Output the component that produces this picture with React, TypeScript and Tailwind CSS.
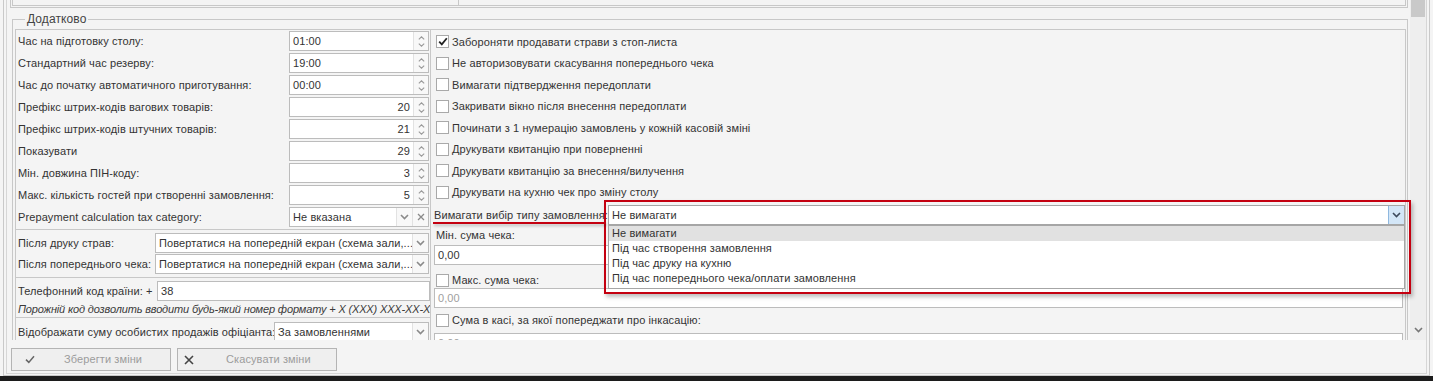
import React from "react";

const spinRows = [
  { label: "Час на підготовку столу:", value: "01:00", right: false },
  { label: "Стандартний час резерву:", value: "19:00", right: false },
  { label: "Час до початку автоматичного приготування:", value: "00:00", right: false },
  { label: "Префікс штрих-кодів вагових товарів:", value: "20", right: true },
  { label: "Префікс штрих-кодів штучних товарів:", value: "21", right: true },
  { label: "Показувати", value: "29", right: true },
  { label: "Мін. довжина ПІН-коду:", value: "3", right: true },
  { label: "Макс. кількість гостей при створенні замовлення:", value: "5", right: true },
];

const checks = [
  { label: "Забороняти продавати страви з стоп-листа", on: true },
  { label: "Не авторизовувати скасування попереднього чека", on: false },
  { label: "Вимагати підтвердження передоплати", on: false },
  { label: "Закривати вікно після внесення передоплати", on: false },
  { label: "Починати з 1 нумерацію замовлень у кожній касовій зміні", on: false },
  { label: "Друкувати квитанцію при поверненні", on: false },
  { label: "Друкувати квитанцію за внесення/вилучення", on: false },
  { label: "Друкувати на кухню чек про зміну столу", on: false },
];

const orderTypes = [
  "Не вимагати",
  "Під час створення замовлення",
  "Під час друку на кухню",
  "Під час попереднього чека/оплати замовлення",
];

function Chevron({ color = "#8a8a8a" }: { color?: string }) {
  return (
    <svg width="9" height="6" viewBox="0 0 9 6">
      <polyline points="1,1 4.5,4.5 8,1" fill="none" stroke={color} strokeWidth="1.6" />
    </svg>
  );
}

function Spinner() {
  return (
    <div className="flex w-[15px] flex-col items-center justify-center gap-[3px] border-l border-[#e2e2e2] bg-[#f8f8f8]">
      <svg width="7" height="4" viewBox="0 0 7 4">
        <polyline points="0.8,3.4 3.5,0.8 6.2,3.4" fill="none" stroke="#9a9a9a" strokeWidth="1.1" />
      </svg>
      <svg width="7" height="4" viewBox="0 0 7 4">
        <polyline points="0.8,0.6 3.5,3.2 6.2,0.6" fill="none" stroke="#9a9a9a" strokeWidth="1.1" />
      </svg>
    </div>
  );
}

function SpinInput({ value, right }: { value: string; right: boolean }) {
  return (
    <div className="flex h-[20px] w-[140px] border border-[#bcbcbc] bg-white">
      <div className={"flex flex-1 items-center px-[3px] " + (right ? "justify-end" : "justify-start")}>{value}</div>
      <Spinner />
    </div>
  );
}

function Combo({ text, clear }: { text: string; clear?: boolean }) {
  return (
    <div className="flex h-[20px] min-w-0 flex-1 border border-[#bcbcbc] bg-white">
      <div className="flex min-w-0 flex-1 items-center overflow-hidden whitespace-nowrap px-[3px]">{text}</div>
      <div className="flex w-[16px] items-center justify-center border-l border-[#e2e2e2] bg-[#f8f8f8]">
        <Chevron />
      </div>
      {clear && (
        <div className="flex w-[16px] items-center justify-center border-l border-[#e2e2e2] bg-[#f8f8f8]">
          <svg width="8" height="8" viewBox="0 0 8 8">
            <path d="M1 1L7 7M7 1L1 7" stroke="#8a8a8a" strokeWidth="1.3" />
          </svg>
        </div>
      )}
    </div>
  );
}

function Checkbox({ on }: { on: boolean }) {
  return (
    <div className="flex h-[13px] w-[13px] shrink-0 items-center justify-center border border-[#a9a9a9] bg-white">
      {on && (
        <svg width="10" height="9" viewBox="0 0 10 9">
          <polyline points="1.2,4.6 3.8,7.3 8.8,1.2" fill="none" stroke="#222" strokeWidth="1.8" />
        </svg>
      )}
    </div>
  );
}

export default function App() {
  return (
    <div className="relative flex h-[381px] w-[1433px] flex-col overflow-hidden bg-[#f4f4f4] font-['Liberation_Sans',Arial,sans-serif] text-[11px] tracking-[0.1px] text-[#333]">
      <div className="h-[376px] px-[3px]">
        <div className="h-full border-x border-b border-[#c9c9c9] px-[2px] pb-[1px]">
          <div className="flex h-full flex-col border-x border-b border-[#d6d6d6]">
            {/* scroll area */}
            <div className="flex h-[340px]">
              <div className="w-[1402px] overflow-hidden">
                <div className="ml-[3px] mr-[1px] flex h-[8px] border-x-[3px] border-b-[3px] border-double border-[#c8c8c8]">
                  <div className="w-[446px] border-r border-[#c8c8c8]" />
                </div>

                <fieldset className="ml-[5px] mt-[4px] w-[1396px] border border-[#c8c8c8] pl-[2px] pr-[1px] pt-[3px]">
                  <legend className="ml-[10px] px-[2px] text-[12px] leading-[14px] text-[#444]">Додатково</legend>

                  <div className="flex border-x border-t border-[#c8c8c8]">
                    {/* left column */}
                    <div className="w-[415px] border-r border-[#c8c8c8]">
                      <div className="pr-[1px]">
                        {spinRows.map((r) => (
                          <div key={r.label} className="flex h-[22px] items-center">
                            <div className="w-[273px] whitespace-nowrap pl-[2px]">{r.label}</div>
                            <SpinInput value={r.value} right={r.right} />
                          </div>
                        ))}
                        <div className="flex h-[22px] items-center">
                          <div className="w-[273px] whitespace-nowrap pl-[2px]">Prepayment calculation tax category:</div>
                          <Combo text="Не вказана" clear />
                        </div>
                      </div>

                      <div className="mt-[1px] flex flex-col gap-[1px] border-t border-[#c8c8c8] pb-[3px] pr-[1px] pt-[3px]">
                        <div className="flex items-center">
                          <div className="w-[139px] whitespace-nowrap pl-[2px]">Після друку страв:</div>
                          <Combo text="Повертатися на попередній екран (схема зали,..." />
                        </div>
                        <div className="flex items-center">
                          <div className="w-[139px] whitespace-nowrap pl-[2px]">Після попереднього чека:</div>
                          <Combo text="Повертатися на попередній екран (схема зали,..." />
                        </div>
                      </div>

                      <div className="border-t border-[#c8c8c8] pt-[3px]">
                        <div className="flex items-center">
                          <div className="w-[141px] whitespace-nowrap pl-[2px]">Телефонний код країни: +</div>
                          <div className="flex h-[20px] flex-1 items-center border border-[#bcbcbc] bg-white px-[3px]">38</div>
                        </div>
                        <div className="flex h-[16px] items-center overflow-hidden whitespace-nowrap pl-[2px] italic tracking-[-0.15px] text-[#3a3a3a]">
                          Порожній код дозволить вводити будь-який номер формату + X (XXX) XXX-XX-XX
                        </div>
                      </div>

                      <div className="border-t border-[#c8c8c8] pr-[1px] pt-[4px]">
                        <div className="flex items-center">
                          <div className="w-[258px] whitespace-nowrap pl-[2px]">Відображати суму особистих продажів офіціанта:</div>
                          <Combo text="За замовленнями" />
                        </div>
                      </div>
                    </div>

                    {/* right column */}
                    <div className="flex-1 pt-[1px]">
                      {checks.map((c) => (
                        <div key={c.label} className="flex h-[21.5px] items-center gap-[3px] pl-[5px]">
                          <Checkbox on={c.on} />
                          <span className="whitespace-nowrap">{c.label}</span>
                        </div>
                      ))}

                      <div className="mt-[2px] flex h-[20px] items-center pl-[3px]">
                        <div className="w-[174px] whitespace-nowrap">Вимагати вибір типу замовлення:</div>
                        <div className="relative flex h-[20px] flex-1 border border-[#a6a6a6] bg-white">
                          <div className="flex flex-1 items-center px-[3px]">Не вимагати</div>
                          <div className="flex w-[16px] items-center justify-center border-l border-[#8fb8df] bg-[#d3e6f7]">
                            <Chevron color="#3d4a5c" />
                          </div>
                          <div className="absolute left-[-1px] right-[-1px] top-[19px] z-10 border border-[#a6a6a6] bg-white pb-[2px]">
                            {orderTypes.map((t, i) => (
                              <div
                                key={t}
                                className={"flex h-[15px] items-center whitespace-nowrap px-[3px] " + (i === 0 ? "bg-[#e1e1e1]" : "")}
                              >
                                {t}
                              </div>
                            ))}
                          </div>
                        </div>
                      </div>

                      <div className="flex h-[20px] items-center pl-[5px]">Мін. сума чека:</div>
                      <div className="ml-[3px] mr-[2px] flex h-[20px] items-center border border-[#bcbcbc] bg-white px-[3px]">0,00</div>
                      <div className="flex h-[23px] items-end gap-[3px] pb-[1px] pl-[5px]">
                        <Checkbox on={false} />
                        <span className="leading-[13px]">Макс. сума чека:</span>
                      </div>
                      <div className="ml-[3px] mr-[2px] flex h-[20px] items-center border border-[#bcbcbc] bg-white px-[3px] text-[#a0a0a0]">0,00</div>
                      <div className="flex h-[25px] items-center gap-[3px] pl-[5px]">
                        <Checkbox on={false} />
                        <span>Сума в касі, за якої попереджати про інкасацію:</span>
                      </div>
                      <div className="ml-[3px] mr-[2px] flex h-[20px] items-center border border-[#bcbcbc] bg-white px-[3px] text-[#a0a0a0]">0,00</div>
                    </div>
                  </div>
                </fieldset>
              </div>

              {/* scrollbar */}
              <div className="ml-[1px] flex w-[16px] flex-col justify-between bg-[#eeeeee] pb-[7px]">
                <div className="mx-[1px] h-[17px] bg-[#c9c9c9]" />
                <div className="flex justify-center">
                  <Chevron color="#777" />
                </div>
              </div>
            </div>

            {/* footer */}
            <div className="flex gap-[6px] pl-[4px] pt-[8px]">
              <div className="flex h-[23px] w-[160px] items-center border border-[#b4b4b4] bg-[#efefef]">
                <svg className="ml-[13px]" width="10" height="9" viewBox="0 0 10 9">
                  <polyline points="1,4.6 3.8,7.4 9,1.2" fill="none" stroke="#666" strokeWidth="1.5" />
                </svg>
                <span className="ml-[29px] text-[#9c9c9c]">Зберегти зміни</span>
              </div>
              <div className="flex h-[23px] w-[160px] items-center border border-[#b4b4b4] bg-[#efefef]">
                <svg className="ml-[6px]" width="10" height="10" viewBox="0 0 10 10">
                  <path d="M1 1L9 9M9 1L1 9" stroke="#444" strokeWidth="1.6" />
                </svg>
                <span className="ml-[32px] text-[#9c9c9c]">Скасувати зміни</span>
              </div>
            </div>
          </div>
        </div>
      </div>
      <div className="h-[5px] bg-[#1c1c1c]" />

      {/* annotation */}
      <div className="absolute left-[604px] top-[200px] h-[94px] w-[807px] border-2 border-[#c40010] shadow-[2px_3px_4px_rgba(0,0,0,0.25)]" />
      <div className="absolute left-[433px] top-[222px] h-[2px] w-[173px] bg-[#c40010] shadow-[1px_2px_3px_rgba(0,0,0,0.25)]" />
    </div>
  );
}
